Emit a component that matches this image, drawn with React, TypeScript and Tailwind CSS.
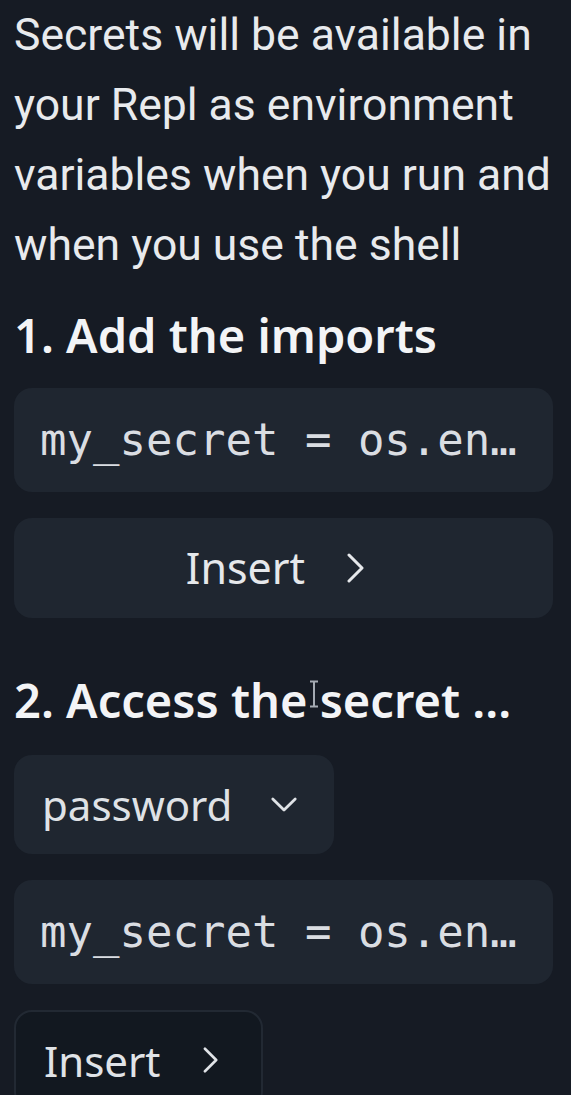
const sans = "font-['Noto_Sans',sans-serif]";
const mono = "font-['DejaVu_Sans_Mono',monospace]";

const Chevron = ({ dir, className }: { dir: "right" | "down"; className?: string }) =>
  dir === "right" ? (
    <svg viewBox="0 0 18 30" className={className} fill="none" stroke="currentColor" strokeWidth={3} strokeLinecap="round" strokeLinejoin="round">
      <path d="M2 2l13 13L2 28" />
    </svg>
  ) : (
    <svg viewBox="0 0 30 18" className={className} fill="none" stroke="currentColor" strokeWidth={3} strokeLinecap="round" strokeLinejoin="round">
      <path d="M3 3l12 12L27 3" />
    </svg>
  );

// code snippet card
const CodeCard = () => (
  <div className="h-[104px] rounded-[18px] bg-[#1f2630] px-[26px] flex items-center">
    <span className={`${mono} text-[44px] text-[#dadde2] whitespace-nowrap`}>
      my_secret = os.en…
    </span>
  </div>
);

export default function App() {
  return (
    <div className={`${sans} min-h-[1095px] w-[571px] overflow-hidden bg-[#161b24] pl-[14px] pr-[18px]`}>
      <p className="-mr-[18px] font-['Roboto',sans-serif] text-[44.5px] leading-[70px] text-[#e8eaed] whitespace-nowrap">
        Secrets will be available in
        <br />
        your Repl as environment
        <br />
        variables when you run and
        <br />
        when you use the shell
      </p>

      <h2 className="mt-[25px] text-[47px] leading-[60px] font-semibold text-[#f3f4f6]">
        1. Add the imports
      </h2>

      <div className="mt-[23px] flex flex-col gap-[26px]">
        <CodeCard />
        <button
          type="button"
          className="h-[100px] rounded-[18px] bg-[#1f2630] flex items-center justify-center gap-[42px] pr-[16px] text-[#e6e8eb]"
        >
          <span className="text-[43px]">Insert</span>
          <Chevron dir="right" className="w-[18px] h-[30px]" />
        </button>
      </div>

      <div className="relative">
        <h2 className="mt-[52px] text-[47px] leading-[60px] font-semibold text-[#f3f4f6]">
          2. Access the secret ...
        </h2>
        {/* text cursor */}
        <svg viewBox="0 0 12 28" className="absolute left-[294px] top-[10px] w-[12px] h-[28px]" fill="none" stroke="#a4aab2" strokeWidth={2}>
          <path d="M2 1.5h8M2 26.5h8M6 1.5v25" />
        </svg>
      </div>

      <div className="mt-[25px] flex flex-col gap-[26px] items-start">
        <button
          type="button"
          className="h-[99px] w-[320px] rounded-[18px] bg-[#1f2630] flex items-center pl-[28px] gap-[38px] text-[#dfe2e6]"
        >
          <span className="text-[42px]">password</span>
          <Chevron dir="down" className="w-[28px] h-[17px]" />
        </button>
        <div className="w-full">
          <CodeCard />
        </div>
        <button
          type="button"
          className="h-[100px] w-[249px] rounded-[18px] border-2 border-[#222933] bg-[#121820] flex items-center pl-[28px] gap-[42px] text-[#e0e3e7]"
        >
          <span className="text-[42px]">Insert</span>
          <Chevron dir="right" className="w-[16px] h-[26px]" />
        </button>
      </div>
    </div>
  );
}
